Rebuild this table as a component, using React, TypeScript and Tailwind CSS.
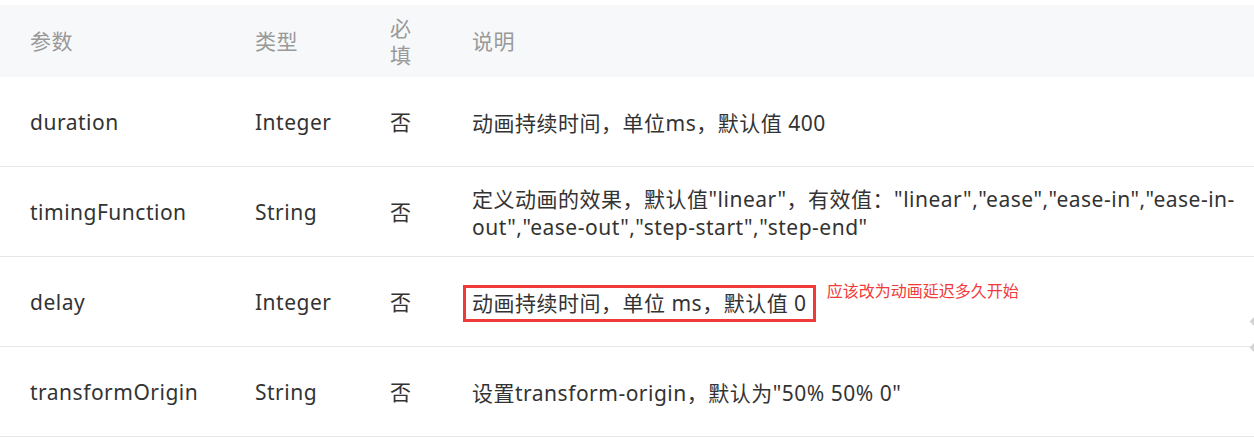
import React from 'react';

type Row = {
  name: string;
  type: string;
  required: string;
  desc: React.ReactNode;
};

const rows: Row[] = [
  { name: 'duration', type: 'Integer', required: '否', desc: '动画持续时间，单位ms，默认值 400' },
  {
    name: 'timingFunction',
    type: 'String',
    required: '否',
    desc: '定义动画的效果，默认值"linear"，有效值："linear","ease","ease-in","ease-in-out","ease-out","step-start","step-end"',
  },
  {
    name: 'delay',
    type: 'Integer',
    required: '否',
    desc: (
      <span className="relative inline-block">
        <span className="-ml-[9px] inline-block border-[3px] border-[#f03a3a] px-[6px] py-[2px] leading-[27px]">
          动画持续时间，单位 ms，默认值 0
        </span>
        <span className="absolute left-full top-[-4px] ml-[11px] whitespace-nowrap text-[16px] leading-[20px] tracking-normal text-[#f03a3a]">
          应该改为动画延迟多久开始
        </span>
      </span>
    ),
  },
  { name: 'transformOrigin', type: 'String', required: '否', desc: '设置transform-origin，默认为"50% 50% 0"' },
];

const grid = 'grid grid-cols-[225px_135px_82px_1fr]';

export default function App() {
  return (
    <div
      className="relative w-[1254px] h-[441px] overflow-hidden bg-white pt-[5px] text-[21px] tracking-[0.5px] text-[#333]"
      style={{ fontFamily: '"Noto Sans", "Noto Sans CJK SC", sans-serif' }}
    >
      <div className={`${grid} h-[72px] bg-[#f7f8fa] pt-[2px] text-[#999]`}>
        <div className="flex items-center px-[30px]">参数</div>
        <div className="flex items-center px-[30px]">类型</div>
        <div className="flex items-center px-[30px] leading-[27px]">必填</div>
        <div className="flex items-center px-[30px]">说明</div>
      </div>
      {rows.map((row) => (
        <div key={row.name} className={`${grid} h-[90px] border-b border-[#e6e6e6] pt-[3px]`}>
          <div className="flex items-center px-[30px]">{row.name}</div>
          <div className="flex items-center px-[30px]">{row.type}</div>
          <div className="flex items-center px-[30px]">{row.required}</div>
          <div className="flex items-center pl-[30px] pr-[4px] leading-[28px]">
            <div>{row.desc}</div>
          </div>
        </div>
      ))}
      <div className="absolute right-[-4px] top-[318px] h-[7px] w-[7px] rotate-45 bg-[#d4d4d4]" />
      <div className="absolute right-[-4px] top-[344px] h-[7px] w-[7px] rotate-45 bg-[#d4d4d4]" />
    </div>
  );
}
